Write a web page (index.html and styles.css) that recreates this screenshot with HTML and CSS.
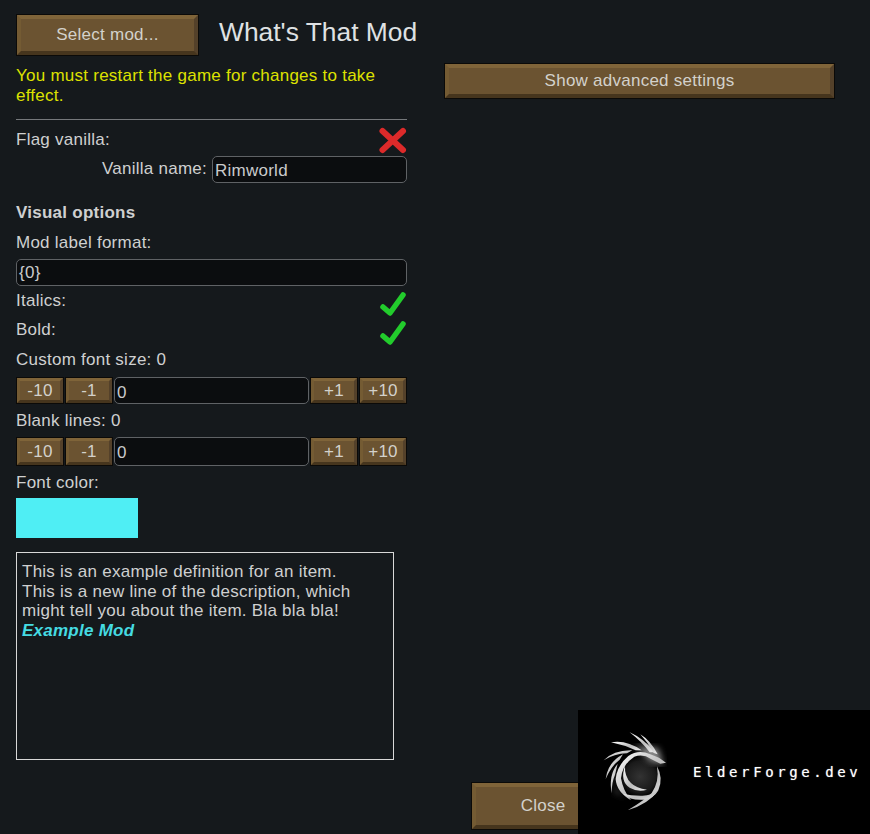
FILE: index.html
```html
<!DOCTYPE html>
<html lang="en">
<head>
    <meta charset="UTF-8">
    <meta name="viewport" content="width=device-width, initial-scale=1.0">
    <title>What's That Mod</title>
    <link rel="stylesheet" href="styles.css">
</head>
<body>
    <div class="columns">
        <div class="left">
            <div class="header">
                <button class="btn btn-select">Select mod...</button>
                <h1 class="title">What's That Mod</h1>
            </div>
            <p class="warning">You must restart the game for changes to take effect.</p>
            <hr class="divider">
            <div class="check-row check-row-first">
                <span class="label">Flag vanilla:</span>
                <svg class="icon icon-flag" viewBox="0 0 27 26"><path class="icon-x" d="M2.5 3 L23 22 M23 3 L2.5 22"/></svg>
            </div>
            <div class="name-row">
                <span class="label">Vanilla name:</span>
                <div class="field field-name">Rimworld</div>
            </div>
            <div class="label heading">Visual options</div>
            <div class="label format-label">Mod label format:</div>
            <div class="field field-format">{0}</div>
            <div class="check-row">
                <span class="label">Italics:</span>
                <svg class="icon" viewBox="0 0 27 24"><path class="icon-check" d="M3 16 L10 22 L23 4"/></svg>
            </div>
            <div class="check-row">
                <span class="label">Bold:</span>
                <svg class="icon" viewBox="0 0 27 24"><path class="icon-check" d="M3 16 L10 22 L23 4"/></svg>
            </div>
            <div class="label size-label">Custom font size: 0</div>
            <div class="stepper">
                <button class="btn btn-step">-10</button>
                <button class="btn btn-step">-1</button>
                <div class="field field-step">0</div>
                <button class="btn btn-step">+1</button>
                <button class="btn btn-step">+10</button>
            </div>
            <div class="label step-label">Blank lines: 0</div>
            <div class="stepper stepper-tall">
                <button class="btn btn-step">-10</button>
                <button class="btn btn-step">-1</button>
                <div class="field field-step">0</div>
                <button class="btn btn-step">+1</button>
                <button class="btn btn-step">+10</button>
            </div>
            <div class="label step-label">Font color:</div>
            <div class="swatch"></div>
            <div class="preview">
                This is an example definition for an item.<br>
                This is a new line of the description, which might tell you about the item. Bla bla bla!<br>
                <b class="preview-mod">Example Mod</b>
            </div>
        </div>
        <div class="right">
            <button class="btn btn-advanced">Show advanced settings</button>
        </div>
    </div>
    <div class="footer">
        <button class="btn btn-close">Close</button>
    </div>

    <!-- watermark sits over the corner of the dialog -->
    <div class="watermark">
        <svg class="dragon" viewBox="0 0 255 270">
            <defs>
                <radialGradient id="disc" cx="0.5" cy="0.5" r="0.5">
                    <stop offset="0" stop-color="#333"/>
                    <stop offset="0.75" stop-color="#1a1a1a"/>
                    <stop offset="1" stop-color="#000"/>
                </radialGradient>
                <linearGradient id="silver" x1="0" y1="0" x2="1" y2="1">
                    <stop offset="0" stop-color="#fff"/>
                    <stop offset="0.55" stop-color="#bdbdbd"/>
                    <stop offset="1" stop-color="#ececec"/>
                </linearGradient>
                <filter id="soft"><feGaussianBlur stdDeviation="2"/></filter>
                <filter id="glow"><feGaussianBlur stdDeviation="10"/></filter>
            </defs>
            <circle cx="135" cy="155" r="62" fill="url(#disc)"/>
            <path d="M120 62 L190 70 L205 120 L165 110 Z" fill="#8a8a8a" filter="url(#glow)"/>
            <path d="M60 130 Q40 190 100 225 L60 200 Z" fill="#6a6a6a" filter="url(#glow)"/>
            <g fill="url(#silver)" filter="url(#soft)">
                <!-- neck and head -->
                <path d="M213 113 L192 98 L166 88 Q130 72 100 93 Q66 122 62 162 Q64 200 108 226 Q84 196 78 160 Q82 118 118 95 Q145 86 168 102 L196 116 Z"/>
                <!-- crest -->
                <path d="M104 22 Q145 40 180 82 L164 82 Q140 50 104 22 Z"/>
                <path d="M136 28 Q166 46 188 88 L176 84 Q160 54 136 28 Z"/>
                <path d="M48 52 Q95 44 140 76 L122 76 Q88 60 48 52 Z"/>
                <!-- feathers -->
                <path d="M26 106 Q58 74 112 76 L96 85 Q58 86 26 106 Z"/>
                <path d="M32 162 Q38 112 84 88 L74 104 Q48 124 32 162 Z"/>
                <path d="M50 205 Q40 150 68 116 L60 150 Q50 172 50 205 Z"/>
                <!-- inner crescent -->
                <path d="M90 122 Q74 168 104 188 Q128 202 156 194 Q124 190 108 174 Q88 154 90 122 Z"/>
                <!-- ring and tail -->
                <path d="M186 124 Q206 160 190 196 Q160 238 98 256 Q148 226 170 204 Q194 170 186 124 Z"/>
                <path d="M84 206 Q106 228 150 224 Q178 218 190 196 Q168 214 136 212 Q106 212 84 206 Z"/>
            </g>
        </svg>
        <span class="watermark-text">ElderForge.dev</span>
    </div>
</body>
</html>
```

FILE: styles.css
```css
* {
    box-sizing: border-box;
}

body {
    margin: 0;
    height: 834px;
    overflow: hidden;
    display: flex;
    flex-direction: column;
    background-color: #15191c;
    color: #cfd0d0;
    font-family: "Liberation Sans", Arial, sans-serif;
    font-size: 17px;
    letter-spacing: 0.25px;
    line-height: 22px;
}

.columns {
    display: flex;
    padding-left: 16px;
}

.left {
    width: 391px;
    padding-top: 14px;
}

.right {
    width: 391px;
    margin-left: 37px;
    padding-top: 63px;
}

.header {
    display: flex;
    align-items: center;
}

.title {
    margin: -6px 0 0 20px;
    font-size: 26.4px;
    font-weight: normal;
    letter-spacing: 0;
    line-height: 30px;
    white-space: nowrap;
    color: #dfe1e3;
}

.warning {
    margin: 10px 0 0;
    width: 375px;
    line-height: 19.5px;
    color: #dde100;
}

.divider {
    margin: 14px 0 0;
    border: none;
    border-top: 1px solid #75787b;
}

.label {
    display: block;
    line-height: 24px;
    margin-bottom: -2px;
}

.btn {
    display: block;
    flex-shrink: 0;
    padding: 0;
    border: 5px solid;
    border-color: #7f6439 #54412a #46351d #745b33;
    outline: 1px solid #0b0a08;
    outline-offset: -1px;
    background-color: #6b5331;
    color: #d3d1cb;
    font-family: inherit;
    font-size: inherit;
    letter-spacing: inherit;
    line-height: 20px;
}

.btn-select {
    width: 183px;
    height: 42px;
}

.btn-advanced {
    width: 100%;
    height: 36px;
}

.btn-step {
    width: 48px;
    height: 100%;
    border-width: 4px;
}

.btn-close {
    width: 144px;
    height: 48px;
}

.check-row {
    display: flex;
    justify-content: space-between;
    height: 29px;
}

.check-row-first {
    height: 28px;
    margin-top: 8px;
}

.icon {
    width: 27px;
    height: 24px;
    margin-top: 2px;
    overflow: visible;
    fill: none;
    stroke-linecap: round;
    stroke-linejoin: round;
}

.icon-flag {
    height: 26px;
    margin-top: 0;
}

.icon-x {
    stroke: #dc2a2a;
    stroke-width: 6;
}

.icon-check {
    stroke: #22cc2c;
    stroke-width: 5.5;
}

.field {
    height: 27px;
    padding: 2px 2px 0;
    border: 1.5px solid #5f6265;
    border-radius: 5px;
    background-color: #0b0d0f;
    color: #c9cacb;
    line-height: 24px;
}

.name-row {
    display: flex;
    justify-content: flex-end;
    align-items: flex-start;
    gap: 5px;
}

.name-row .label {
    margin-top: 1px;
}

.field-name {
    width: 195px;
}

.heading {
    margin-top: 18px;
    font-weight: bold;
}

.format-label {
    margin-top: 8px;
}

.field-format {
    margin: 6px 0 3px;
    padding-top: 1px;
}

.size-label {
    margin-top: 1px;
}

.step-label {
    margin-top: 5px;
}

.stepper {
    display: flex;
    gap: 1px;
    height: 27px;
    margin-top: 7px;
}

.stepper-tall {
    height: 29px;
    margin-top: 6px;
}

.field-step {
    width: 195px;
    height: 100%;
    padding-top: 3px;
}

.swatch {
    width: 122px;
    height: 40px;
    margin-top: 5px;
    background-color: #4feef4;
}

.preview {
    width: 378px;
    height: 208px;
    margin-top: 14px;
    padding: 9px 5px;
    border: 1px solid #d8d8d8;
    line-height: 19.5px;
}

.preview-mod {
    color: #45dbe2;
    font-style: italic;
}

.footer {
    margin-top: auto;
    padding: 0 0 4px 471px;
}

.watermark {
    position: absolute;
    left: 578px;
    top: 710px;
    width: 292px;
    height: 124px;
    display: flex;
    align-items: center;
    padding-left: 17px;
    background-color: #000;
}

.dragon {
    width: 85px;
    height: 90px;
    flex-shrink: 0;
    margin-top: -4px;
}

.watermark-text {
    margin-left: 13px;
    font-family: "DejaVu Sans Mono", monospace;
    font-size: 14px;
    letter-spacing: 3.6px;
    color: #fff;
    text-shadow: 0 0 1px rgba(255, 255, 255, 0.6);
}
```
